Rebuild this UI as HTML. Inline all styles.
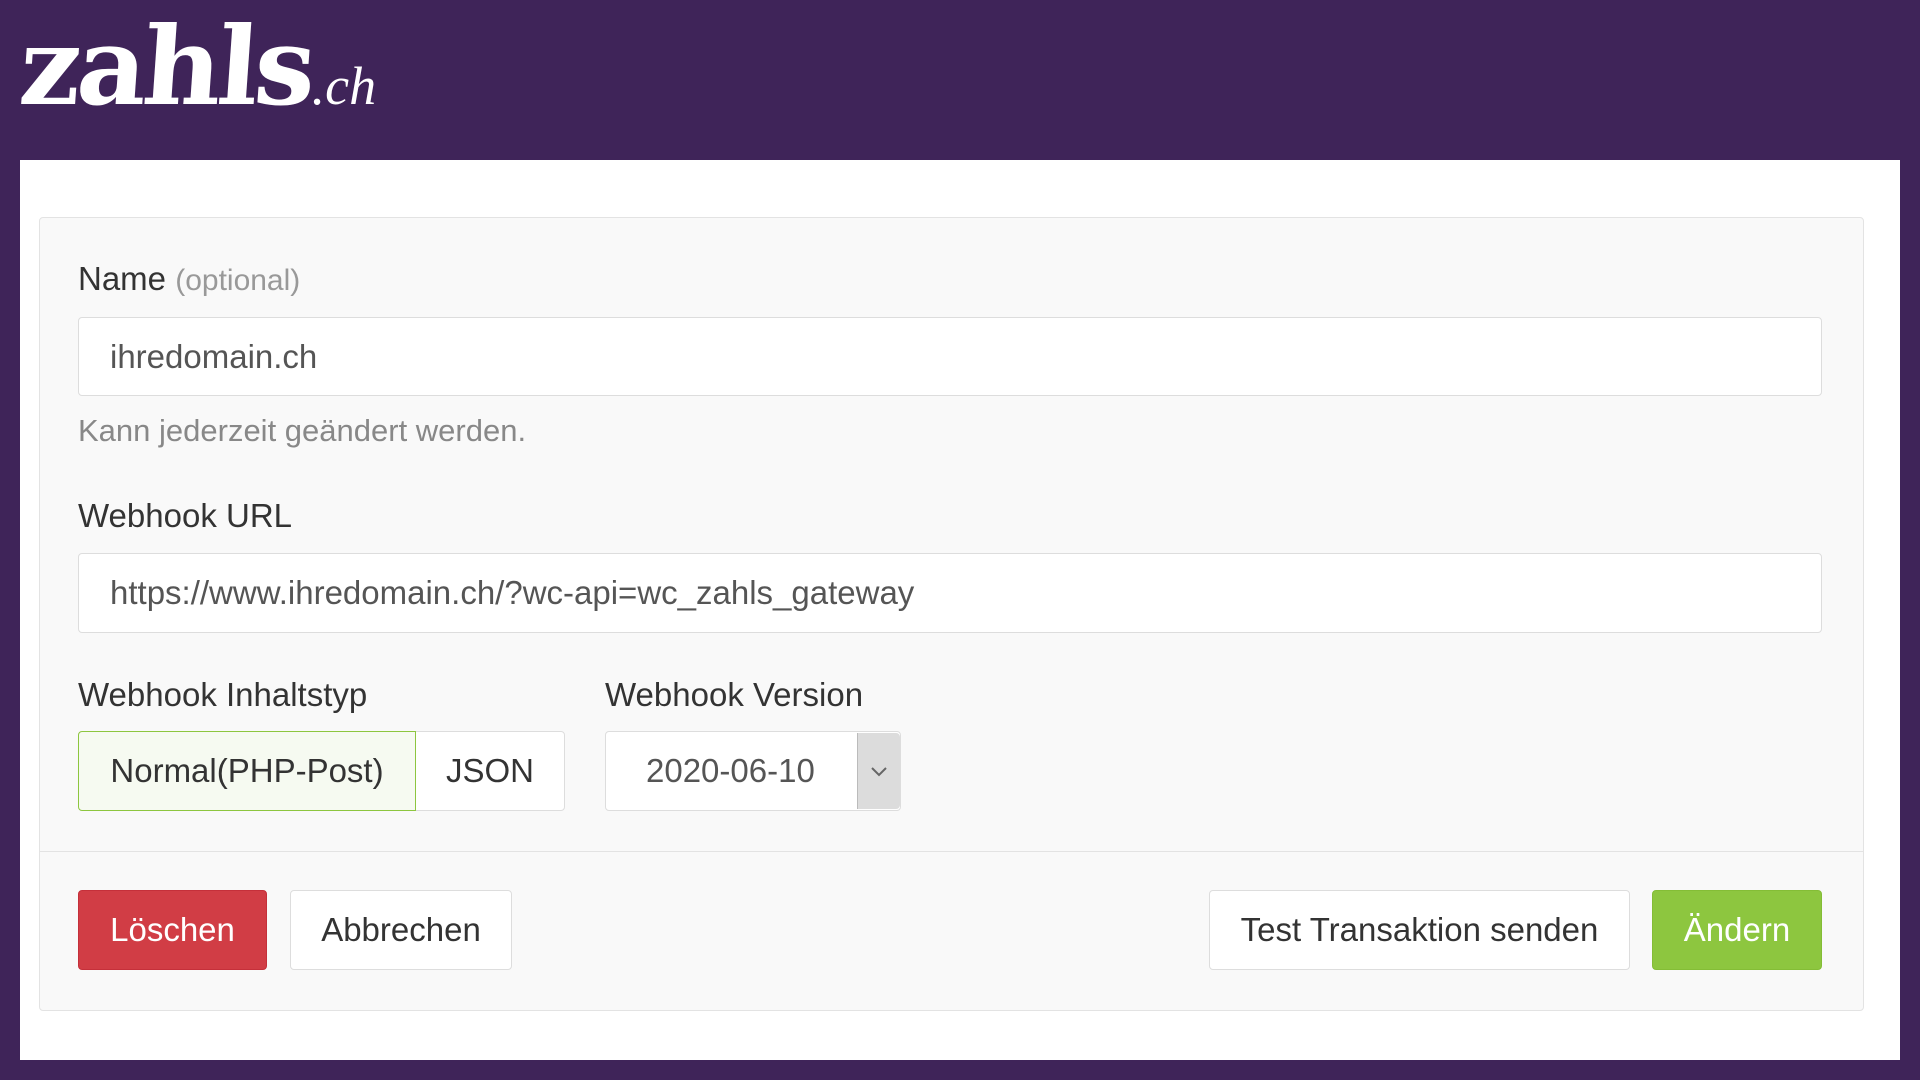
<!DOCTYPE html>
<html><head><meta charset="utf-8"><style>
*{box-sizing:border-box;margin:0;padding:0}
body{width:1920px;height:1080px;background:#3f2459;font-family:"Liberation Sans",sans-serif;position:relative;overflow:hidden;color:#333}
.logo{position:absolute;left:20px;top:4px;color:#fff;white-space:nowrap}
.logo b{font-family:"DejaVu Serif",serif;font-weight:bold;font-size:108px;letter-spacing:-4px;display:inline-block;transform:skewX(-4deg)}
.logo i{font-family:"Liberation Serif",serif;font-size:54px;font-style:italic;margin-left:0px}
.panel{position:absolute;left:20px;top:160px;width:1880px;height:900px;background:#fff}
.card{position:absolute;left:39px;top:217px;width:1825px;height:794px;background:#f9f9f9;border:1px solid #e3e3e3;border-radius:4px}
.abs{position:absolute}
.lbl{font-size:33px;color:#333}
.lbl span{color:#999;font-size:30px}
.inp{background:#fff;border:1px solid #ddd;border-radius:4px;font-size:33px;color:#555;padding-left:31px;display:flex;align-items:center}
.help{font-size:31px;color:#888}
.btn{border-radius:4px;font-size:33px;display:flex;align-items:center;justify-content:center;border:1px solid #ddd;background:#fff;color:#333}
</style></head><body>
<div class="logo"><b>zahls</b><i>.ch</i></div>
<div class="panel"></div>
<div class="card"></div>
<div class="abs lbl" style="left:78px;top:260px">Name <span>(optional)</span></div>
<div class="abs inp" style="left:78px;top:317px;width:1744px;height:79px">ihredomain.ch</div>
<div class="abs help" style="left:78px;top:413px">Kann jederzeit geändert werden.</div>
<div class="abs lbl" style="left:78px;top:497px">Webhook URL</div>
<div class="abs inp" style="left:78px;top:553px;width:1744px;height:80px">https://www.ihredomain.ch/?wc-api=wc_zahls_gateway</div>
<div class="abs lbl" style="left:78px;top:676px">Webhook Inhaltstyp</div>
<div class="abs lbl" style="left:605px;top:676px">Webhook Version</div>
<div class="abs btn" style="left:78px;top:731px;width:338px;height:80px;background:#f6faf1;border-color:#8dc63f;border-radius:4px 0 0 4px;z-index:2">Normal(PHP-Post)</div>
<div class="abs btn" style="left:415px;top:731px;width:150px;height:80px;border-radius:0 4px 4px 0">JSON</div>
<div class="abs inp" style="left:605px;top:731px;width:296px;height:80px;padding-left:40px;color:#555">2020-06-10</div>
<div class="abs" style="left:857px;top:733px;width:43px;height:76px;background:#dcdcdc;border-left:1px solid #bbb;border-radius:0 4px 4px 0;display:flex;align-items:center;justify-content:center">
<svg width="18" height="12" viewBox="0 0 18 12"><path d="M2 3l7 7 7-7" fill="none" stroke="#666" stroke-width="2"/></svg></div>
<div class="abs" style="left:40px;top:851px;width:1823px;height:1px;background:#e3e3e3"></div>
<div class="abs btn" style="left:78px;top:890px;width:189px;height:80px;background:#d13d45;border-color:#c5303a;color:#fff">Löschen</div>
<div class="abs btn" style="left:290px;top:890px;width:222px;height:80px">Abbrechen</div>
<div class="abs btn" style="left:1209px;top:890px;width:421px;height:80px">Test Transaktion senden</div>
<div class="abs btn" style="left:1652px;top:890px;width:170px;height:80px;background:#8dc63f;border-color:#84bd36;color:#fff">Ändern</div>
</body></html>
